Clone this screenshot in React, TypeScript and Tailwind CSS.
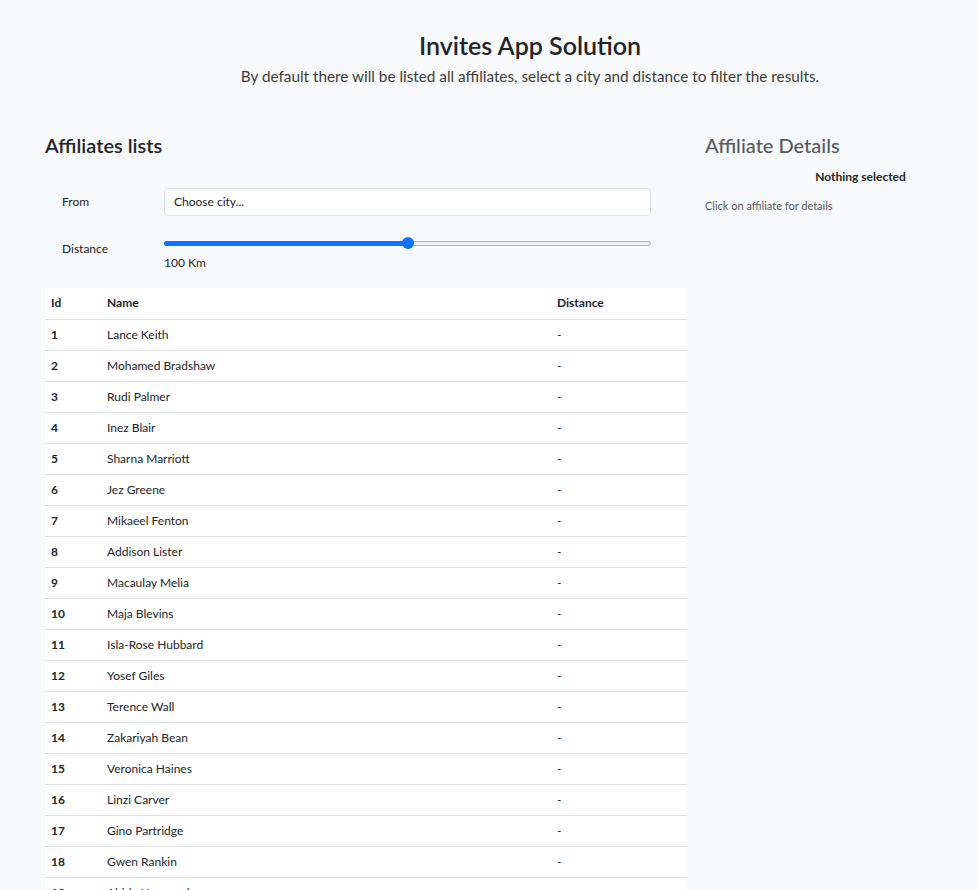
import React from 'react';

const AFFILIATES = [
  'Lance Keith',
  'Mohamed Bradshaw',
  'Rudi Palmer',
  'Inez Blair',
  'Sharna Marriott',
  'Jez Greene',
  'Mikaeel Fenton',
  'Addison Lister',
  'Macaulay Melia',
  'Maja Blevins',
  'Isla-Rose Hubbard',
  'Yosef Giles',
  'Terence Wall',
  'Zakariyah Bean',
  'Veronica Haines',
  'Linzi Carver',
  'Gino Partridge',
  'Gwen Rankin',
  'Abida Harwood',
  'Kylan Mcfadden',
];

const DistanceSlider: React.FC<{ value: number; max: number }> = ({ value, max }) => {
  const pct = (value / max) * 100;
  return (
    <div className="relative h-[14px] flex items-center">
      <div className="w-full h-[5px] rounded-full bg-[#efefef] border border-[#b2b2b2]" />
      <div className="absolute left-0 h-[5px] rounded-full bg-[#0b75ff]" style={{ width: `${pct}%` }} />
      <div
        className="absolute w-[12px] h-[12px] rounded-full bg-[#0b75ff] -translate-x-1/2"
        style={{ left: `${pct}%` }}
      />
    </div>
  );
};

export default function App() {
  return (
    <div className="min-h-screen bg-[#f8f9fa] text-[#212529] font-['Lato','Noto_Sans',sans-serif]">
      {/* Header */}
      <div className="pl-[81px] pt-[29px] text-center">
        <h1 className="text-[25px] font-semibold leading-[32px] text-[#212529]">Invites App Solution</h1>
        <p className="mt-[4px] text-[15.3px] font-normal leading-[22px] text-[#3d3d3d]">
          By default there will be listed all affiliates, select a city and distance to filter the results.
        </p>
      </div>

      <div className="flex pl-[45px] pt-[46px] gap-[18px]">
        {/* Left column */}
        <div className="w-[642px] shrink-0">
          <h2 className="text-[20px] font-semibold leading-[24px] text-[#212529]">Affiliates lists</h2>

          <div className="mt-[31px] pl-[17px] pr-[36px] text-[12px]">
            <div className="flex items-center h-[28px]">
              <label className="w-[102px] shrink-0">From</label>
              <div className="flex-1 h-[28px] bg-white border border-[#dee2e6] rounded-[4px] flex items-center px-[9px]">
                Choose city...
              </div>
            </div>
            <div className="flex mt-[20px]">
              <label className="w-[102px] shrink-0 pt-[6px] leading-[14px]">Distance</label>
              <div className="flex-1">
                <DistanceSlider value={100} max={200} />
                <div className="mt-[6px] leading-[14px]">100 Km</div>
              </div>
            </div>
          </div>

          <table className="mt-[18px] w-full bg-white text-[12px] border-collapse">
            <thead>
              <tr className="h-[31px] border-b border-[#dee2e6]">
                <th className="w-[56px] text-left font-bold px-[6px]">Id</th>
                <th className="w-[450px] text-left font-bold px-[6px]">Name</th>
                <th className="text-left font-bold px-[6px]">Distance</th>
              </tr>
            </thead>
            <tbody>
              {AFFILIATES.map((name, i) => (
                <tr key={name} className="h-[31px] border-b border-[#dee2e6]">
                  <th className="text-left font-bold px-[6px]">{i + 1}</th>
                  <td className="px-[6px]">{name}</td>
                  <td className="px-[6px]">-</td>
                </tr>
              ))}
            </tbody>
          </table>
        </div>

        {/* Right column */}
        <div className="w-[311px] shrink-0">
          <h2 className="text-[20px] font-medium leading-[24px] text-[#555b61]">Affiliate Details</h2>
          <div className="mt-[12px] text-center text-[12px] font-bold leading-[16px]">Nothing selected</div>
          <p className="mt-[14px] text-[11px] leading-[14px] text-[#555b61]">Click on affiliate for details</p>
        </div>
      </div>
    </div>
  );
}
